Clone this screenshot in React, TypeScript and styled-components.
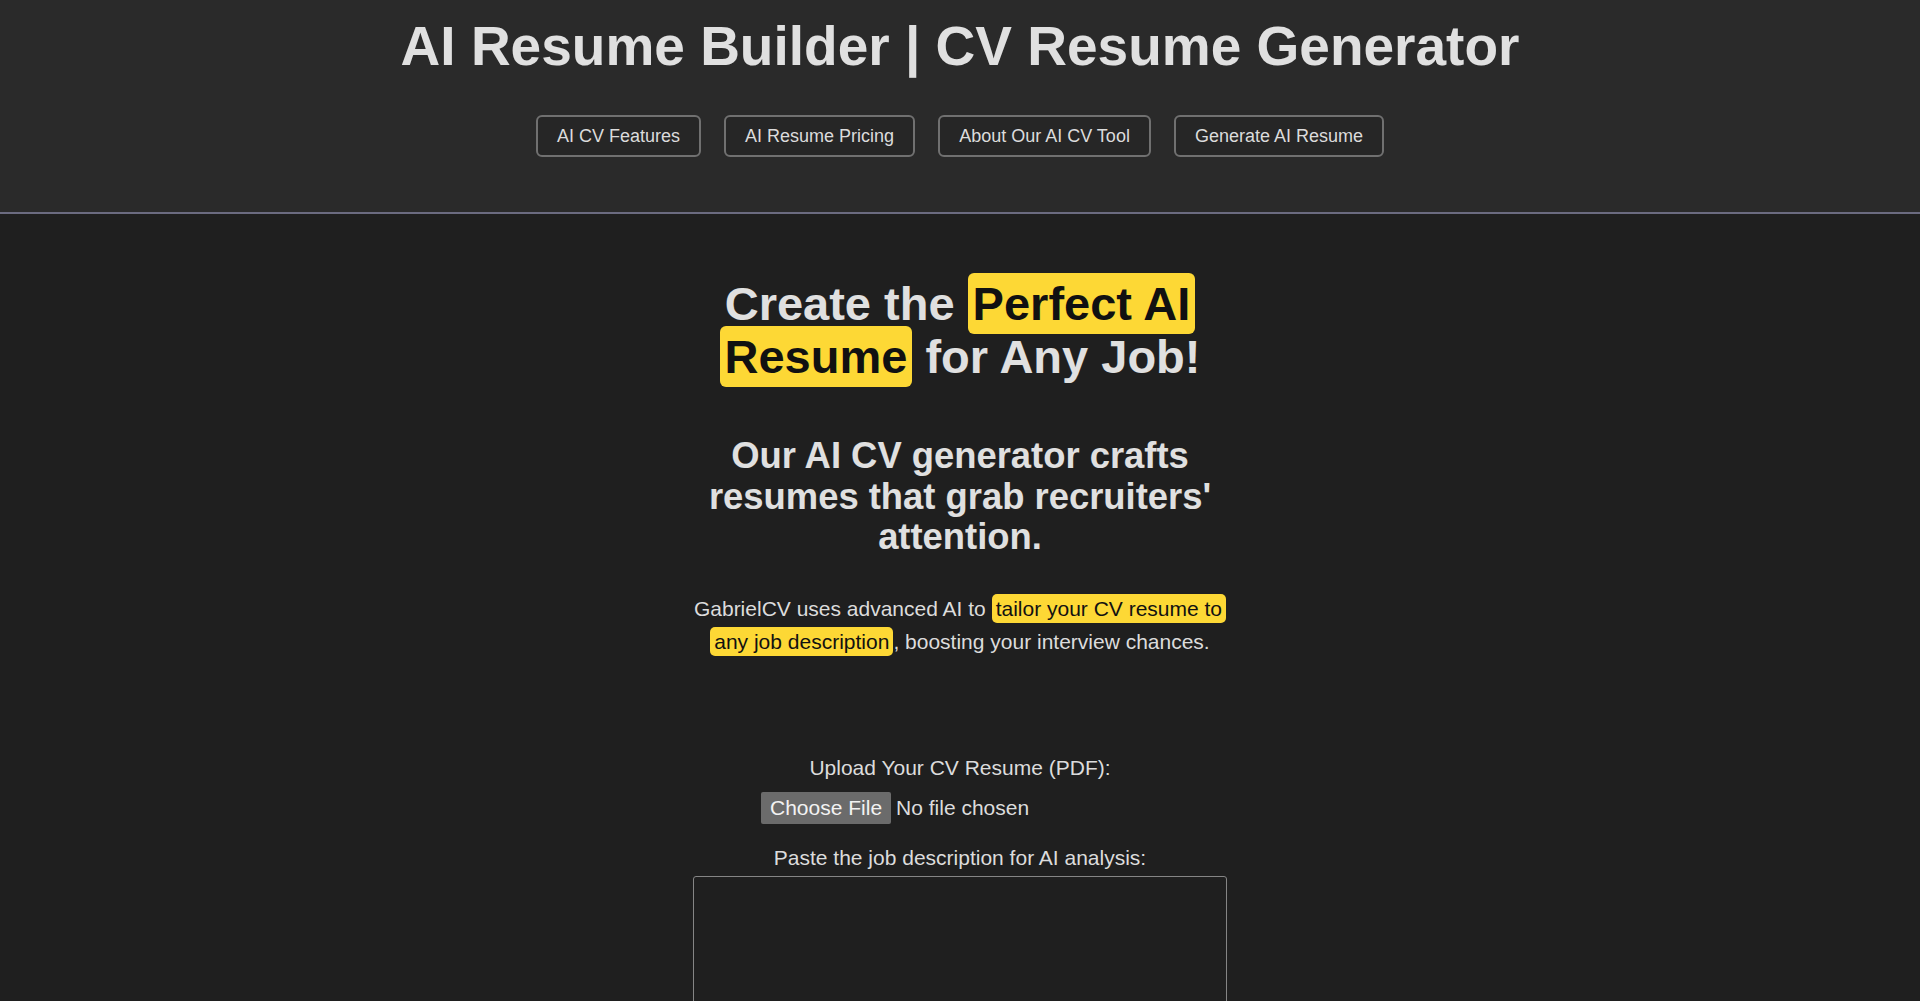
import React from "react"
import styled, { createGlobalStyle } from "styled-components"

const GlobalStyle = createGlobalStyle`
  html, body {
    margin: 0;
    padding: 0;
    background: #1f1f1f;
    color-scheme: dark;
    font-family: "Liberation Sans", Arial, Helvetica, sans-serif;
    color: #dcdcdc;
  }
`

const Header = styled.header`
  background: #2a2a2a;
  border-bottom: 2px solid #6b6b80;
  padding: 15px 0 55px;
  text-align: center;
`

const SiteTitle = styled.h1`
  margin: 0;
  font-size: 55px;
  line-height: 1.15;
  font-weight: bold;
  color: #e0e0e0;
`

const Nav = styled.nav`
  display: flex;
  justify-content: center;
  gap: 23px;
  margin-top: 37px;
`

const NavButton = styled.a`
  display: inline-block;
  padding: 8.5px 19px;
  border: 2px solid #707070;
  border-radius: 6px;
  background: #262626;
  color: #dcdcdc;
  font-size: 18px;
  line-height: 1.15;
  text-decoration: none;
  cursor: pointer;
`

const Main = styled.main`
  width: 536px;
  margin: 0 auto;
  padding: 64px 0 80px;
  text-align: center;
`

const HeroTitle = styled.h2`
  margin: 0 0 53px;
  font-size: 47px;
  line-height: 1.12;
  font-weight: bold;
  color: #e0e0e0;
`

const Subtitle = styled.h3`
  margin: 0 0 36px;
  font-size: 36.4px;
  line-height: 1.11;
  font-weight: bold;
  color: #e0e0e0;
`

const Intro = styled.p`
  margin: 0;
  font-size: 21px;
  line-height: 1.57;
  color: #dcdcdc;
`

const Mark = styled.span<{ $big?: boolean }>`
  background: #fdd835;
  color: #111;
  padding: ${p => (p.$big ? "4px 5px" : "3px 4px")};
  border-radius: ${p => (p.$big ? "6px" : "5px")};
  -webkit-box-decoration-break: clone;
  box-decoration-break: clone;
`

const Form = styled.form`
  display: flex;
  flex-direction: column;
  align-items: center;
  margin-top: 97px;
`

const FieldLabel = styled.label<{ $gap: number }>`
  display: block;
  font-size: 21px;
  line-height: 1.15;
  color: #dcdcdc;
  margin-bottom: ${p => p.$gap}px;
`

const FileInput = styled.input`
  font-family: inherit;
  font-size: 21px;
  color: #dcdcdc;
  margin: 0 0 22px;

  &::file-selector-button {
    font: inherit;
    padding: 4px 9px;
    margin-right: 5px;
    border: none;
    border-radius: 2px;
    background: #6b6b6b;
    color: #f2f2f2;
  }
`

const JobText = styled.textarea`
  box-sizing: border-box;
  width: 534px;
  height: 220px;
  background: #1f1f1f;
  border: 1px solid #858585;
  border-radius: 3px;
  color: #dcdcdc;
  font-family: inherit;
  font-size: 18px;
  resize: vertical;
`

const navItems = [
  "AI CV Features",
  "AI Resume Pricing",
  "About Our AI CV Tool",
  "Generate AI Resume",
]

export default function App() {
  return (
    <>
      <GlobalStyle />
      <Header>
        <SiteTitle>AI Resume Builder | CV Resume Generator</SiteTitle>
        <Nav>
          {navItems.map(item => (
            <NavButton key={item}>{item}</NavButton>
          ))}
        </Nav>
      </Header>
      <Main>
        <HeroTitle>
          Create the <Mark $big>Perfect AI Resume</Mark> for Any Job!
        </HeroTitle>
        <Subtitle>
          Our AI CV generator crafts resumes that grab recruiters' attention.
        </Subtitle>
        <Intro>
          GabrielCV uses advanced AI to{" "}
          <Mark>tailor your CV resume to any job description</Mark>, boosting
          your interview chances.
        </Intro>
        <Form onSubmit={e => e.preventDefault()}>
          <FieldLabel htmlFor="cv" $gap={12}>
            Upload Your CV Resume (PDF):
          </FieldLabel>
          <FileInput id="cv" type="file" accept="application/pdf" />
          <FieldLabel htmlFor="job" $gap={5}>
            Paste the job description for AI analysis:
          </FieldLabel>
          <JobText id="job" />
        </Form>
      </Main>
    </>
  )
}
